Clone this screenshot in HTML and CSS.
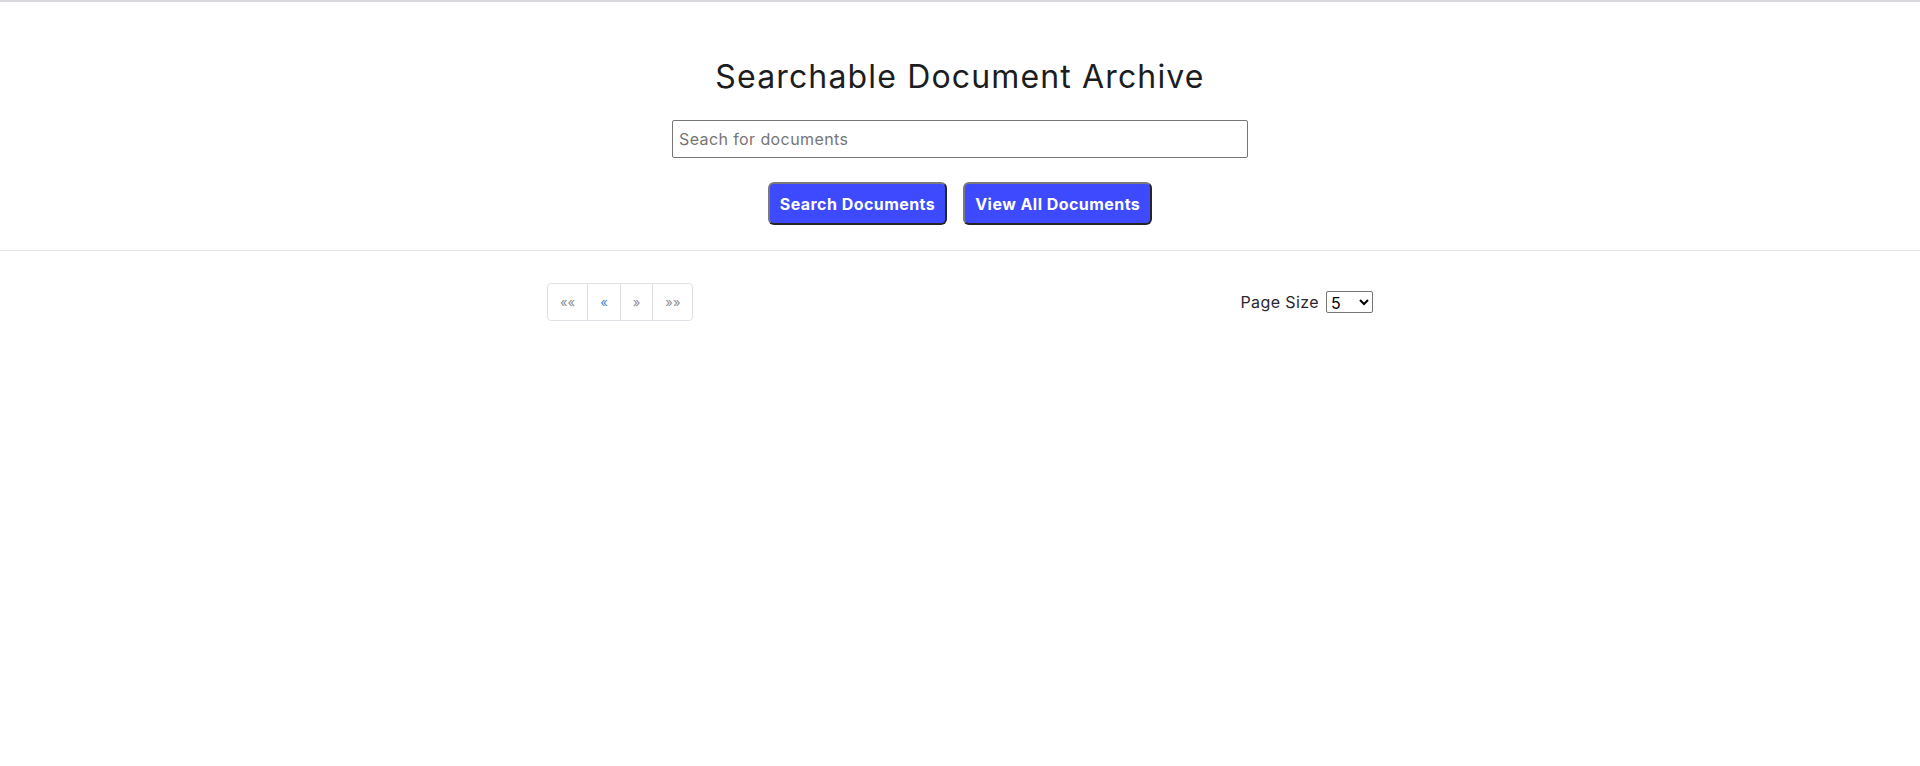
FILE: index.html
```html
<!DOCTYPE html>
<html lang="en">
<head>
<meta charset="utf-8">
<title>Searchable Document Archive</title>
<link rel="stylesheet" href="styles.css">
</head>
<body>
  <header class="hero">
    <h1 class="title">Searchable Document Archive</h1>
    <form class="search" onsubmit="return false">
      <input class="search-input" type="text" placeholder="Seach for documents">
      <div class="actions">
        <button class="btn" type="submit">Search Documents</button>
        <button class="btn" type="button">View All Documents</button>
      </div>
    </form>
  </header>
  <main class="results">
    <div class="toolbar">
      <nav class="pager">
        <a class="pager-item muted" href="#">&laquo;&laquo;</a>
        <a class="pager-item link" href="#">&laquo;</a>
        <a class="pager-item muted" href="#">&raquo;</a>
        <a class="pager-item muted" href="#">&raquo;&raquo;</a>
      </nav>
      <label class="page-size">Page Size
        <select class="page-select">
          <option>5</option>
          <option>10</option>
          <option>20</option>
        </select>
      </label>
    </div>
  </main>
</body>
</html>
```
FILE: styles.css
```css
* { box-sizing: border-box; }

html, body {
  margin: 0;
  padding: 0;
  background: #ffffff;
}

body {
  border-top: 2px solid #d7d7dc;
  font-family: "Inter", "DejaVu Sans", sans-serif;
  color: #212529;
}

.hero {
  padding: 55px 0 25px;
  border-bottom: 1px solid #e5e5e5;
  display: flex;
  flex-direction: column;
  align-items: center;
}

.title {
  margin: 0;
  font-size: 32px;
  line-height: 40px;
  font-weight: 400;
  letter-spacing: 1.15px;
  color: #1b1d21;
}

.search {
  margin-top: 23px;
  display: flex;
  flex-direction: column;
  align-items: center;
}

.search-input {
  width: 576px;
  height: 38px;
  border: 1px solid #767676;
  border-radius: 2px;
  padding: 0 6px;
  font-family: inherit;
  font-size: 16px;
  letter-spacing: 0.4px;
  color: #212529;
}

.search-input::placeholder {
  color: #757575;
}

.actions {
  margin-top: 24px;
  display: flex;
  gap: 16px;
}

.btn {
  height: 43px;
  padding: 0 10px;
  background: #3d4afd;
  color: #ffffff;
  font-family: inherit;
  font-size: 16px;
  font-weight: 700;
  letter-spacing: 0.45px;
  border-radius: 6px;
  border-style: solid;
  border-width: 2px;
  border-color: #7a7a7a #262626 #262626 #7a7a7a;
  cursor: pointer;
}

.results {
  padding-top: 32px;
}

.toolbar {
  width: 826px;
  margin: 0 auto;
  display: flex;
  justify-content: space-between;
  align-items: center;
}

.pager {
  display: flex;
}

.pager-item {
  height: 38px;
  padding: 0 12px;
  display: flex;
  align-items: center;
  font-size: 13px;
  text-decoration: none;
  border: 1px solid #dee2e6;
  margin-left: -1px;
}

.pager-item:first-child {
  margin-left: 0;
  border-radius: 4px 0 0 4px;
}

.pager-item:last-child {
  border-radius: 0 4px 4px 0;
}

.muted { color: #8a8f98; }
.link { color: #4f86c6; }

.page-size {
  display: flex;
  align-items: center;
  gap: 7px;
  font-size: 16px;
  letter-spacing: 0.4px;
  color: #2a2730;
}

.page-select {
  width: 47px;
  height: 22px;
  font-family: inherit;
  font-size: 16px;
  letter-spacing: 0;
  border: 1px solid #767676;
  border-radius: 2px;
  background: #ffffff;
  color: #000000;
}
```
